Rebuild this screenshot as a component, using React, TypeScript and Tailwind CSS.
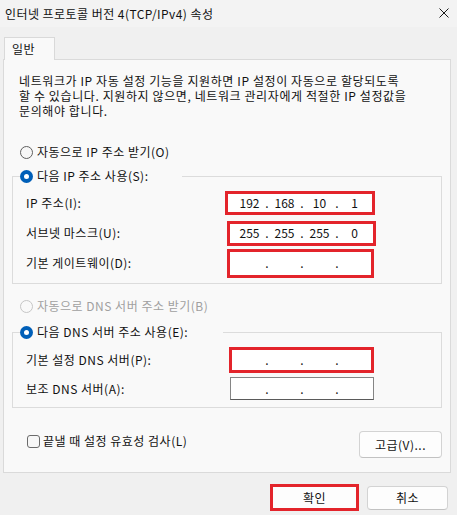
import React, { Fragment } from "react";

function Radio({ checked, disabled }: { checked?: boolean; disabled?: boolean }) {
  if (checked) {
    return (
      <span className="flex h-[13px] w-[13px] shrink-0 items-center justify-center rounded-full bg-[#005fb8]">
        <span className="h-[5px] w-[5px] rounded-full bg-white" />
      </span>
    );
  }
  return (
    <span
      className={
        disabled
          ? "h-[13px] w-[13px] shrink-0 rounded-full border border-[#c6c6c6] bg-[#f9f9f9]"
          : "h-[13px] w-[13px] shrink-0 rounded-full border border-[#5f5f5f] bg-[#f7f7f7]"
      }
    />
  );
}

function Octets({ values }: { values: string[] }) {
  return (
    <div className="flex h-full items-center tracking-normal">
      {values.map((v, i) => (
        <Fragment key={i}>
          <span className="w-[27px] text-center">{v}</span>
          {i < 3 && <span className="w-[8px] text-center">.</span>}
        </Fragment>
      ))}
    </div>
  );
}

const EMPTY = ["", "", "", ""];

export default function App() {
  return (
    <div className="flex h-[515px] w-[457px] flex-col overflow-hidden bg-[#f0f0f0] font-['Noto_Sans_CJK_KR','Noto_Sans',sans-serif] text-[12px] leading-[16px] tracking-[0.5px] text-[#111]">
      {/* title bar */}
      <div className="flex h-[27px] items-center justify-between bg-[#f3f3f3] pl-[5px] pr-[8px]">
        <span className="tracking-[0.45px]">인터넷 프로토콜 버전 4(TCP/IPv4) 속성</span>
        <svg width="10" height="10" viewBox="0 0 10 10" className="mt-[-1px]">
          <path d="M0.5 0.5 L9.5 9.5 M9.5 0.5 L0.5 9.5" stroke="#1a1a1a" strokeWidth="1" fill="none" />
        </svg>
      </div>

      {/* tabs area */}
      <div className="pl-[3px] pt-[10px]">
        <div className="relative z-10 -mb-px ml-[1px] flex h-[23px] w-[51px] items-center border border-b-0 border-[#d9d9d9] bg-[#f9f9f9] pl-[7px]">
          일반
        </div>
        <div className="flex h-[414px] w-[448px] flex-col border border-[#dadada] bg-[#f9f9f9]">
          <p className="whitespace-nowrap pl-[15px] pt-[13px] leading-[15px] tracking-[0.6px]">
            네트워크가 IP 자동 설정 기능을 지원하면 IP 설정이 자동으로 할당되도록
            <br />
            할 수 있습니다. 지원하지 않으면, 네트워크 관리자에게 적절한 IP 설정값을
            <br />
            문의해야 합니다.
          </p>

          <div className="mt-[26px] flex h-[16px] items-center gap-[4px] pl-[16px]">
            <Radio />
            <span>자동으로 IP 주소 받기(O)</span>
          </div>

          <fieldset className="ml-[8px] mt-[8px] w-[430px] border border-[#dcdcdc] pb-[5px] pt-[4px]">
            <legend className="ml-[7px] w-[162px]">
              <div className="flex h-[16px] items-center gap-[4px]">
                <Radio checked />
                <span>다음 IP 주소 사용(S):</span>
              </div>
            </legend>
            <div className="flex h-[30px] items-center">
              <span className="w-[212px] pl-[13px]">IP 주소(I):</span>
              <div className="h-[24px] w-[150px] border-[3px] border-[#e3242b] bg-white pl-[8px]">
                <Octets values={["192", "168", "10", "1"]} />
              </div>
            </div>
            <div className="flex h-[30px] items-center">
              <span className="w-[214px] pl-[13px]">서브넷 마스크(U):</span>
              <div className="h-[25px] w-[149px] border-[3px] border-[#e3242b] bg-white pl-[6px]">
                <Octets values={["255", "255", "255", "0"]} />
              </div>
            </div>
            <div className="flex h-[30px] items-center">
              <span className="w-[214px] pl-[13px]">기본 게이트웨이(D):</span>
              <div className="h-[29px] w-[147px] border-[3px] border-[#e3242b] bg-white pl-[6px]">
                <Octets values={EMPTY} />
              </div>
            </div>
          </fieldset>

          <div className="mt-[14px] flex h-[16px] items-center gap-[4px] pl-[16px] text-[#a0a0a0]">
            <Radio disabled />
            <span>자동으로 DNS 서버 주소 받기(B)</span>
          </div>

          <fieldset className="ml-[8px] mt-[10px] w-[430px] border border-[#dcdcdc] pb-[4px] pt-[5px]">
            <legend className="ml-[7px] w-[203px]">
              <div className="flex h-[16px] items-center gap-[4px]">
                <Radio checked />
                <span>다음 DNS 서버 주소 사용(E):</span>
              </div>
            </legend>
            <div className="flex h-[29px] items-center">
              <span className="w-[216px] pl-[13px]">기본 설정 DNS 서버(P):</span>
              <div className="h-[26px] w-[145px] border-[3px] border-[#e3242b] bg-white pl-[4px]">
                <Octets values={EMPTY} />
              </div>
            </div>
            <div className="flex h-[29px] items-center">
              <span className="w-[217px] pl-[13px]">보조 DNS 서버(A):</span>
              <div className="h-[23px] w-[144px] border border-[#858585] border-b-[#5a5a5a] bg-white pl-[5px]">
                <Octets values={EMPTY} />
              </div>
            </div>
          </fieldset>

          <div className="mt-[23px] flex items-start justify-between pl-[23px] pr-[8px]">
            <label className="mt-[2px] flex h-[16px] items-center gap-[3px]">
              <span className="h-[13px] w-[13px] rounded-[3px] border border-[#6b6b6b] bg-[#f7f7f7]" />
              <span>끝낼 때 설정 유효성 검사(L)</span>
            </label>
            <button className="flex h-[27px] w-[83px] items-center justify-center rounded-[4px] border border-[#d3d3d3] border-b-[#c2c2c2] bg-[#fdfdfd]">
              고급(V)...
            </button>
          </div>
        </div>
      </div>

      {/* footer buttons */}
      <div className="mt-[11px] flex items-center justify-end gap-[8px] pr-[9px]">
        <div className="flex h-[27px] w-[89px] items-center justify-center border-[3px] border-[#e3242b] bg-[#fdfdfd]">
          확인
        </div>
        <button className="flex h-[24px] w-[81px] items-center justify-center rounded-[4px] border border-[#d3d3d3] border-b-[#c2c2c2] bg-[#fdfdfd]">
          취소
        </button>
      </div>
    </div>
  );
}
